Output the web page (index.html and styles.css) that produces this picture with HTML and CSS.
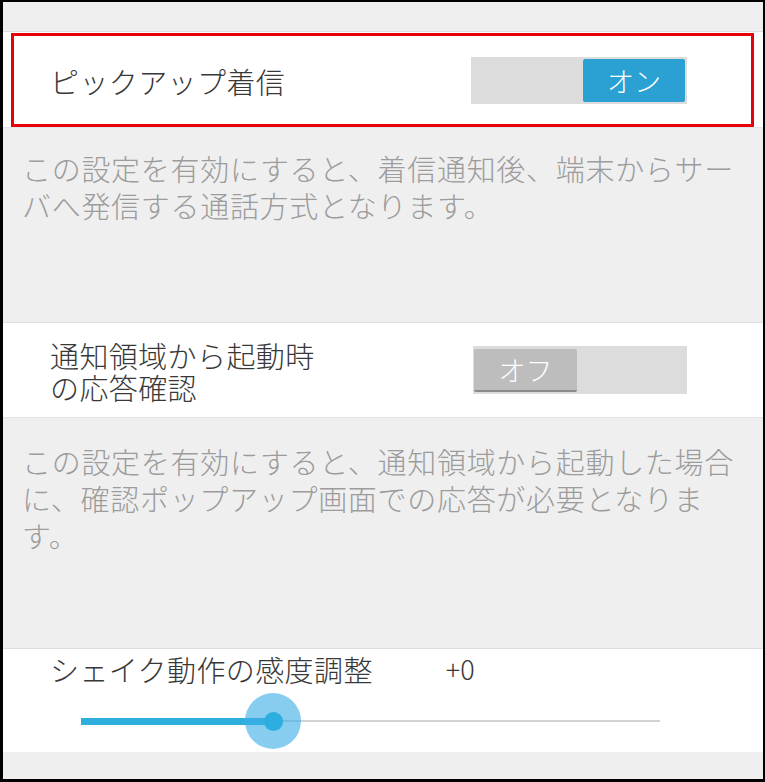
FILE: index.html
```html
<!DOCTYPE html>
<html lang="ja">
<head>
    <meta charset="UTF-8">
    <meta name="viewport" content="width=device-width, initial-scale=1.0">
    <title>着信設定</title>
    <link rel="stylesheet" href="styles.css">
</head>
<body>
    <div class="screen">
        <div class="spacer-top"></div>

        <!-- ピックアップ着信 -->
        <div class="row row-pickup">
            <span class="label">ピックアップ着信</span>
            <div class="toggle is-on">
                <span class="knob">オン</span>
            </div>
        </div>
        <div class="desc desc-pickup">
            <p>この設定を有効にすると、着信通知後、端末からサー</p>
            <p>バへ発信する通話方式となります。</p>
        </div>

        <!-- 応答確認 -->
        <div class="row row-confirm">
            <div class="label label-two">
                <p>通知領域から起動時</p>
                <p>の応答確認</p>
            </div>
            <div class="toggle is-off">
                <span class="knob">オフ</span>
            </div>
        </div>
        <div class="desc desc-confirm">
            <p>この設定を有効にすると、通知領域から起動した場合</p>
            <p>に、確認ポップアップ画面での応答が必要となりま</p>
            <p>す。</p>
        </div>

        <!-- シェイク感度 -->
        <div class="row-shake">
            <div class="shake-head">
                <span class="label">シェイク動作の感度調整</span>
                <span class="value">+0</span>
            </div>
            <div class="slider">
                <div class="track"></div>
                <div class="fill"></div>
                <div class="thumb"><span class="dot"></span></div>
            </div>
        </div>

        <div class="spacer-bottom"></div>
    </div>
</body>
</html>
```

FILE: styles.css
```css
/* Global Styles */
* {
    box-sizing: border-box;
}

body {
    margin: 0;
    font-family: "Noto Sans CJK JP", "Noto Sans", sans-serif;
    font-weight: 300;
    background: #000;
}

p {
    margin: 0;
}

.screen {
    width: 765px;
    height: 782px;
    border: 2px solid #000;
    border-left-width: 3px;
    border-bottom-width: 3px;
    background: #efefef;
    display: flex;
    flex-direction: column;
}

.spacer-top {
    height: 29px;
}

.spacer-bottom {
    height: 27px;
}

/* Setting rows */
.row {
    background: #fff;
    border-top: 1px solid #dedede;
    border-bottom: 1px solid #e4e4e4;
    display: flex;
    align-items: center;
    justify-content: space-between;
    padding: 0 76px 0 47px;
}

.row-pickup {
    height: 97px;
    position: relative;
    padding-top: 2px;
}

/* red highlight frame drawn over the first row */
.row-pickup::after {
    content: "";
    position: absolute;
    top: 1px;
    left: 8px;
    right: 9px;
    bottom: 0;
    border: 3px solid #e8000b;
}

.row-confirm {
    height: 96px;
}

.label {
    font-size: 29px;
    color: #383838;
    line-height: 36px;
    letter-spacing: 0.4px;
    white-space: nowrap;
}

.label-two {
    line-height: 32px;
    margin-top: 2px;
}

/* Toggle */
.toggle {
    width: 216px;
    height: 47px;
    background: #dcdcdc;
    display: flex;
    align-items: center;
    padding: 2px;
}

.is-on {
    justify-content: flex-end;
}

.is-off {
    width: 214px;
    height: 48px;
    padding: 2px 1px;
}

.knob {
    width: 102px;
    height: 43px;
    border-radius: 2px;
    color: #fff;
    font-size: 27px;
    line-height: 43px;
    text-align: center;
}

.is-on .knob {
    background: #2ba0d2;
}

.is-off .knob {
    width: 103px;
    background: #bdbdbd;
    border-bottom: 2px solid #8a8a8a;
    line-height: 41px;
}

/* Descriptions */
.desc {
    padding: 22px 0 0 19px;
    font-size: 29px;
    line-height: 37px;
    letter-spacing: 0.7px;
    color: #9c9c9c;
    white-space: nowrap;
}

.desc-pickup {
    height: 194px;
}

.desc-confirm {
    height: 230px;
    padding-top: 25px;
}

/* Shake sensitivity */
.row-shake {
    height: 104px;
    background: #fff;
    border-top: 1px solid #dedede;
    padding: 2px 0 0 47px;
}

.shake-head {
    display: flex;
    gap: 73px;
}

.value {
    font-size: 27px;
    line-height: 36px;
    color: #383838;
}

.slider {
    position: relative;
    width: 579px;
    height: 56px;
    margin: 6px 0 0 31px;
}

.track {
    position: absolute;
    left: 0;
    right: 0;
    top: 27px;
    height: 2px;
    background: #d2d2d2;
}

.fill {
    position: absolute;
    left: 0;
    top: 25px;
    width: 193px;
    height: 7px;
    background: #2eaedd;
}

.thumb {
    position: absolute;
    left: 164px;
    top: 0;
    width: 56px;
    height: 56px;
    border-radius: 50%;
    background: rgba(60, 175, 230, 0.62);
    display: flex;
    align-items: center;
    justify-content: center;
}

.dot {
    width: 19px;
    height: 19px;
    border-radius: 50%;
    background: #2caee0;
}
```
